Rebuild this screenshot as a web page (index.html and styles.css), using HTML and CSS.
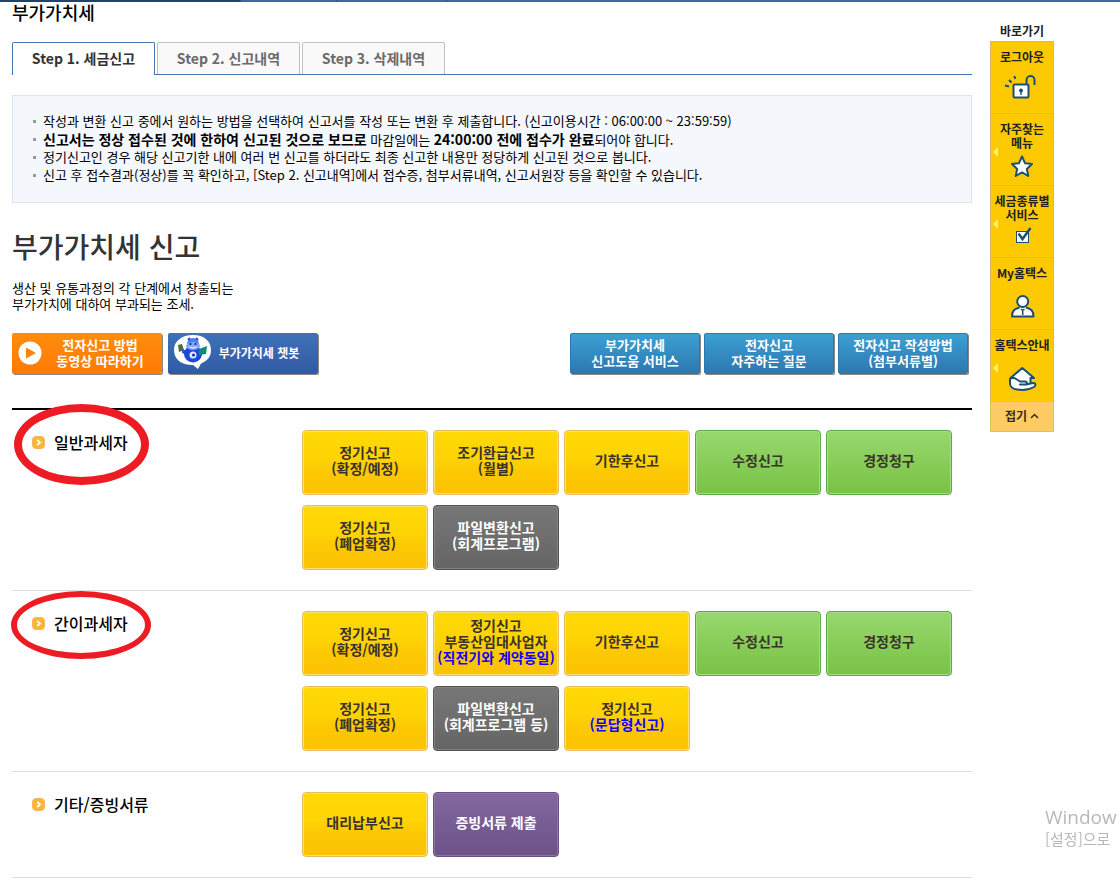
FILE: index.html
```html
<!DOCTYPE html>
<html lang="ko">
<head>
<meta charset="utf-8">
<title>부가가치세 신고</title>
<link rel="stylesheet" href="styles.css">
</head>
<body>
<div class="topbar"><span class="topbar-dark"></span><span class="topbar-a"></span><span class="topbar-b"></span><span class="topbar-c"></span></div>
<div class="page">
  <main class="main">
    <h1 class="page-title">부가가치세</h1>
    <nav class="tabs">
      <button class="tab tab-active" type="button">Step 1. 세금신고</button>
      <button class="tab" type="button">Step 2. 신고내역</button>
      <button class="tab" type="button">Step 3. 삭제내역</button>
    </nav>
    <ul class="notice">
      <li>작성과 변환 신고 중에서 원하는 방법을 선택하여 신고서를 작성 또는 변환 후 제출합니다. (신고이용시간 : 06:00:00 ~ 23:59:59)</li>
      <li><b>신고서는 정상 접수된 것에 한하여 신고된 것으로 보므로</b> 마감일에는 <b>24:00:00 전에 접수가 완료</b>되어야 합니다.</li>
      <li>정기신고인 경우 해당 신고기한 내에 여러 번 신고를 하더라도 최종 신고한 내용만 정당하게 신고된 것으로 봅니다.</li>
      <li>신고 후 접수결과(정상)를 꼭 확인하고, [Step 2. 신고내역]에서 접수증, 첨부서류내역, 신고서원장 등을 확인할 수 있습니다.</li>
    </ul>
    <h2 class="tax-title">부가가치세 신고</h2>
    <p class="tax-desc">생산 및 유통과정의 각 단계에서 창출되는<br>부가가치에 대하여 부과되는 조세.</p>
    <div class="links">
      <button class="link-btn link-orange" type="button">
        <svg class="play" viewBox="0 0 24 24" aria-hidden="true"><circle cx="12" cy="12" r="11.5" fill="#fff"/><path d="M8 6.5 18 12 8 17.500z" fill="#ff850a"/></svg>
        <span class="link-text">전자신고 방법<br>동영상 따라하기</span>
      </button>
      <button class="link-btn link-chat" type="button">
        <svg class="bot" viewBox="0 0 38 36" aria-hidden="true">
          <path d="M19 0C30 0 37 6 37 15c0 7-4 11-10 13.500L24 34l-5-4C7 30 0 24 0 15S8 0 19 0z" fill="#fff"/>
          <path d="M4 10l4-1 2 6-5 2z" fill="#4e6a46"/><path d="M8 14l5 2v4l-5-2z" fill="#3155c4"/>
          <circle cx="19" cy="9" r="6" fill="#4d7df0"/><path d="M14 5l2-2M24 5l-2-2" stroke="#2b4ed0" stroke-width="2"/>
          <ellipse cx="19" cy="19" rx="9" ry="8.500" fill="#1e48d8"/>
          <ellipse cx="19" cy="11" rx="7" ry="4" fill="#7da5fa"/><circle cx="16.500" cy="9" r="1" fill="#0c1c70"/><circle cx="21.500" cy="9" r="1" fill="#0c1c70"/>
          <path d="M15.500 12q3.500 2 7 0" fill="none" stroke="#fff"/>
          <path d="M25 14l8-3-1 8-7 1z" fill="#0c8d72"/><circle cx="19" cy="20" r="3.500" fill="#dce9ff"/><circle cx="19.500" cy="20" r="1.500" fill="#123090"/>
        </svg>
        <span class="link-text">부가가치세 챗봇</span>
      </button>
      <div class="links-right">
        <button class="link-btn link-blue" type="button">부가가치세<br>신고도움 서비스</button>
        <button class="link-btn link-blue" type="button">전자신고<br>자주하는 질문</button>
        <button class="link-btn link-blue" type="button">전자신고 작성방법<br>(첨부서류별)</button>
      </div>
    </div>

    <div class="sections">
      <section class="section">
        <h3 class="label"><svg class="bullet" viewBox="0 0 13 13" aria-hidden="true"><rect x=".5" y=".5" width="12" height="12" rx="3.500" fill="#fdb632" stroke="#f5b45f"/><path d="M5.200 3.800 8 6.500 5.200 9.200" fill="none" stroke="#fff" stroke-width="1.800"/></svg>일반과세자</h3>
        <div class="buttons">
          <button class="btn yellow" type="button">정기신고<br>(확정/예정)</button>
          <button class="btn yellow" type="button">조기환급신고<br>(월별)</button>
          <button class="btn yellow" type="button">기한후신고</button>
          <button class="btn green" type="button">수정신고</button>
          <button class="btn green" type="button">경정청구</button>
          <button class="btn yellow" type="button">정기신고<br>(폐업확정)</button>
          <button class="btn gray" type="button">파일변환신고<br>(회계프로그램)</button>
        </div>
        <span class="ring ring-first"></span>
      </section>
      <section class="section">
        <h3 class="label"><svg class="bullet" viewBox="0 0 13 13" aria-hidden="true"><rect x=".5" y=".5" width="12" height="12" rx="3.500" fill="#fdb632" stroke="#f5b45f"/><path d="M5.200 3.800 8 6.500 5.200 9.200" fill="none" stroke="#fff" stroke-width="1.800"/></svg>간이과세자</h3>
        <div class="buttons">
          <button class="btn yellow" type="button">정기신고<br>(확정/예정)</button>
          <button class="btn yellow" type="button">정기신고<br>부동산임대사업자<br><span class="accent">(직전기와 계약동일)</span></button>
          <button class="btn yellow" type="button">기한후신고</button>
          <button class="btn green" type="button">수정신고</button>
          <button class="btn green" type="button">경정청구</button>
          <button class="btn yellow" type="button">정기신고<br>(폐업확정)</button>
          <button class="btn gray" type="button">파일변환신고<br>(회계프로그램 등)</button>
          <button class="btn yellow" type="button">정기신고<br><span class="accent">(문답형신고)</span></button>
        </div>
        <span class="ring ring-second"></span>
      </section>
      <section class="section">
        <h3 class="label"><svg class="bullet" viewBox="0 0 13 13" aria-hidden="true"><rect x=".5" y=".5" width="12" height="12" rx="3.500" fill="#fdb632" stroke="#f5b45f"/><path d="M5.200 3.800 8 6.500 5.200 9.200" fill="none" stroke="#fff" stroke-width="1.800"/></svg>기타/증빙서류</h3>
        <div class="buttons">
          <button class="btn yellow" type="button">대리납부신고</button>
          <button class="btn purple" type="button">증빙서류 제출</button>
        </div>
      </section>
    </div>
  </main>

  <aside class="rail">
    <div class="rail-title">바로가기</div>
    <a class="rail-item" href="#">로그아웃
      <svg class="rail-icon" viewBox="0 0 36 32" aria-hidden="true"><g fill="none" stroke="#1c4f74" stroke-width="2"><rect x="9.500" y="3.500" width="15" height="13" rx="1" fill="#fff"/><path d="M22.500 3V-1a4 4 0 0 1 8 0V4M5 -1l2.500 2.500M10.300-5l1 3M1 4.500l4 1"/></g><circle cx="17" cy="9.500" r="2" fill="#1c4f74"/><path d="M16.300 10h1.400v4h-1.400z" fill="#1c4f74"/></svg></a>
    <a class="rail-item rail-more" href="#">자주찾는<br>메뉴
      <svg class="rail-icon" viewBox="0 0 36 32" aria-hidden="true"><path d="M18 3.500l3 6.700 7 .8-5.200 4.900 1.500 7.100-6.300-3.600-6.300 3.600 1.500-7.100L8 11l7-.8z" fill="#fff" stroke="#1c4f74" stroke-width="2" stroke-linejoin="round"/></svg></a>
    <a class="rail-item rail-more" href="#">세금종류별<br>서비스
      <svg class="rail-icon" viewBox="0 0 36 32" aria-hidden="true"><rect x="12.500" y="6.500" width="12" height="11" fill="#fff" stroke="#1c4f74"/><path d="M14.500 8.500l4 5.500 8-11" fill="none" stroke="#1c4f74" stroke-width="2.500"/></svg></a>
    <a class="rail-item" href="#">My홈택스
      <svg class="rail-icon" viewBox="0 0 36 32" aria-hidden="true"><g fill="#fff" stroke="#1c4f74" stroke-width="2" stroke-linejoin="round"><path d="M15.500 10.500C10 12 8 14 8 19.500h21.500c0-5.500-2-7.500-7.500-9"/><circle cx="18.700" cy="4.500" r="5.500"/><path d="M17 12l1.700 1.500 1.700-1.500M18.700 13.500V18" fill="none" stroke-width="1.500"/></g></svg></a>
    <a class="rail-item rail-more" href="#">홈택스안내
      <svg class="rail-icon" viewBox="0 0 36 32" aria-hidden="true"><g fill="#fff" stroke="#1c4f74" stroke-width="2" stroke-linejoin="round"><path d="M10 18V9H6.500L18.300-1 30 9h-3.500v9z"/><path d="M6 10c2-1.500 5-1 7 .5l3 2h5c2.500 0 2.500 3 0 3h-5 6l7-1.500c3 0 3 2.500 1 4-5 3-11 3.500-17 2.500-4-.5-7-3-7-6z"/></g></svg></a>
    <button class="rail-fold" type="button">접기<svg class="fold-icon" viewBox="0 0 9 6" aria-hidden="true"><path d="M1 5l3.500-3.500L8 5" fill="none" stroke="#3b2c14" stroke-width="1.500"/></svg></button>
  </aside>
</div>
<div class="watermark"><div class="wm-big">Window</div><div class="wm-small">[설정]으로</div></div>
</body>
</html>
```

FILE: styles.css
```css
* { box-sizing: border-box; }
body {
  margin: 0;
  background: #fff;
  color: #000;
  font: 13px/16px "Noto Sans CJK KR", sans-serif;
}
h1, h2, h3, p, ul { margin: 0; padding: 0; }
button { font-family: inherit; margin: 0; padding: 0; cursor: pointer; }

.topbar { display: flex; gap: 1px; height: 2px; background: #2a5288; }
.topbar span { background: #3b6aab; }
.topbar .topbar-dark { width: 240px; background: #1d4373; }
.topbar-a { width: 95px; }
.topbar-b { width: 109px; }
.topbar-c { flex: 1; }

.page { display: flex; gap: 18px; padding: 0 66px 0 12px; }
.main { flex: 1; min-width: 0; }
.page-title { height: 22px; font-size: 18px; line-height: 20px; font-weight: 500; }

.tabs {
  display: flex;
  gap: 2px;
  margin-top: 18px;
  border-bottom: 1px solid #4377b2;
}
.tab {
  width: 143px;
  height: 32px;
  padding-bottom: 2px;
  border: 1px solid #c0c0c0;
  border-bottom: 0;
  border-radius: 2px 2px 0 0;
  background: #f9f9f9;
  color: #6a6a6a;
  font-size: 14px;
  line-height: 20px;
  font-weight: 700;
}
.tab-active {
  height: 33px;
  margin-bottom: -1px;
  padding-bottom: 3px;
  border-color: #4377b2;
  background: #fff;
  color: #333;
}

.notice {
  margin-top: 20px;
  padding: 16px 20px 18px;
  border: 1px solid #dde6f0;
  background: #f4f7fc;
  list-style: none;
  line-height: 18px;
}
.notice li { height: 18px; padding-left: 10px; background: linear-gradient(#999, #999) 0 8px / 3px 3px no-repeat; }
.notice b { font-size: 14px; }

.tax-title {
  margin-top: 23px;
  font-size: 28px;
  line-height: 40px;
  font-weight: 500;
  color: #333;
}
.tax-desc { margin-top: 14px; }

.links { display: flex; gap: 6px; margin-top: 21px; }
.links-right { display: flex; gap: 4px; margin-left: auto; padding-right: 4px; }
.link-btn {
  height: 41px;
  padding-bottom: 1px;
  border: 0;
  border-radius: 2px;
  color: #fff;
  font-size: 13px;
  line-height: 16px;
  font-weight: 700;
  box-shadow: 1px 1px 0 #8b8685;
}
.link-orange, .link-chat { display: flex; align-items: center; width: 150px; padding-left: 6px; }
.link-orange { background: linear-gradient(#ff8d0c, #ff7a06); }
.link-chat { font-size: 12px; background: linear-gradient(#3d72b9, #3359a4); }
.link-text { flex: 1; padding-right: 4px; text-align: center; white-space: nowrap; }
.link-chat .link-text { padding-right: 12px; }
.play { width: 24px; height: 24px; }
.bot { width: 38px; height: 36px; }
.link-blue { width: 130px; border: 1px solid #2d78b0; background: linear-gradient(#3ba0d3, #2d78b0); }

.sections { margin-top: 34px; border-top: 2px solid #000; }
.section {
  position: relative;
  display: flex;
  align-items: flex-start;
  padding: 20px 0;
  border-bottom: 1px solid #ddd;
}
.label {
  display: flex;
  align-items: center;
  gap: 9px;
  flex: 0 0 290px;
  padding-left: 20px;
  font-size: 16px;
  line-height: 24px;
  font-weight: 500;
}
.bullet { width: 13px; height: 13px; }
.buttons { display: flex; flex-wrap: wrap; gap: 10px 5px; flex: 1; }
.btn {
  width: 126px;
  height: 65px;
  padding-bottom: 5px;
  border: 1px solid;
  border-radius: 4px;
  font-size: 14px;
  line-height: 16px;
  font-weight: 700;
  white-space: nowrap;
  color: #3b332b;
}
.yellow { border-color: #e5bc62; background: linear-gradient(#ffd905, #fed404 42%, #fcc803 65%, #fcc203); box-shadow: inset 0 0 0 1px #ffe06a; }
.green { border-color: #5fa64c; background: linear-gradient(#98d86e, #78c245); box-shadow: inset 0 0 0 1px #a6dc86; }
.gray { border-color: #505050; background: linear-gradient(#777, #656565); box-shadow: inset 0 0 0 1px #828282; color: #fff; }
.purple { border-color: #685088; background: linear-gradient(#82689f, #6d5187); box-shadow: inset 0 0 0 1px #8c74a8; color: #fff; }
.accent { color: #1400ff; }

.ring { position: absolute; border: 8px solid #ed1c24; border-radius: 50%; pointer-events: none; }
.ring-first { left: 2px; top: -6px; width: 135px; height: 81px; }
.ring-second { left: -1px; top: 0; width: 140px; height: 68px; border-width: 6px; }

.rail { flex: 0 0 64px; padding-top: 22px; text-align: center; font-size: 12px; line-height: 14px; font-weight: 700; }
.rail-title { height: 17px; white-space: nowrap; color: #222; }
.rail-item {
  position: relative;
  display: flow-root;
  height: 72px;
  padding-top: 8px;
  border: 1px solid #e2b070;
  border-bottom: 0;
  background: #fdca02;
  color: #222;
  text-decoration: none;
  white-space: nowrap;
}
.rail-icon { position: absolute; left: 13px; bottom: 0; width: 36px; height: 32px; overflow: visible; }
.rail-more::before {
  content: "";
  position: absolute;
  left: 2px;
  top: 33px;
  border: 5px solid transparent;
  border-left: 0;
  border-right-color: #fff06a;
}
.rail-fold {
  display: flex;
  align-items: center;
  justify-content: center;
  gap: 3px;
  width: 100%;
  height: 31px;
  padding-bottom: 2px;
  border: 1px solid #d2c95a;
  background: #ffcb65;
  color: #3b2c14;
  font-size: 12px;
  font-weight: 700;
}
.fold-icon { width: 9px; height: 6px; }

.watermark {
  position: fixed;
  right: 0;
  bottom: 32px;
  width: 75px;
  white-space: nowrap;
  color: #b8b8b8;
}
.wm-big { font: 19px/24px "Open Sans", "Noto Sans", sans-serif; }
.wm-small { font-size: 15px; line-height: 20px; }
```
